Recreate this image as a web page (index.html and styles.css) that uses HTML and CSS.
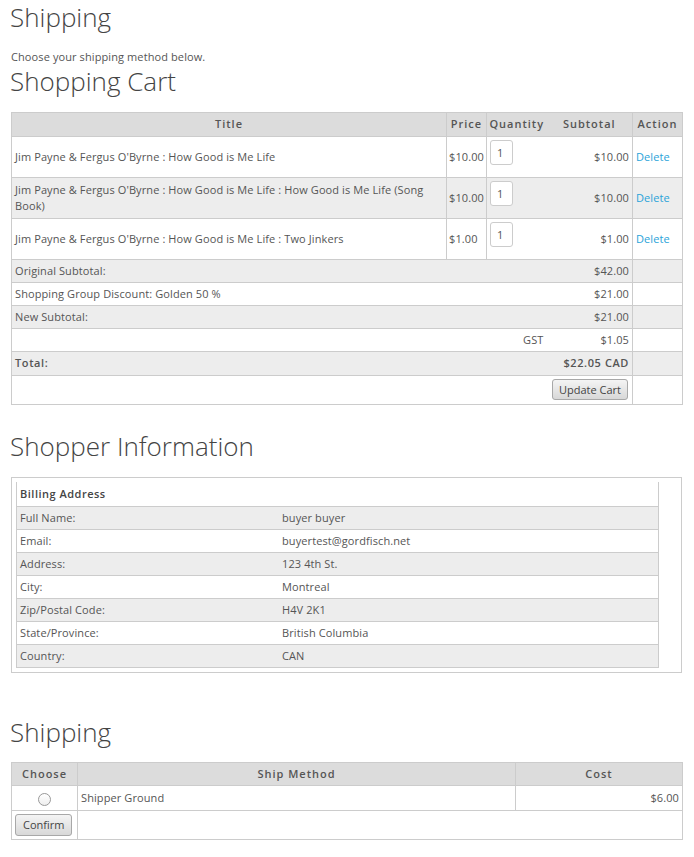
FILE: index.html
```html
<!DOCTYPE html>
<html lang="en">
<head>
    <meta charset="UTF-8">
    <title>Shipping</title>
    <link rel="stylesheet" href="styles.css">
</head>
<body>
    <h1 class="page-title">Shipping</h1>
    <p class="intro">Choose your shipping method below.</p>

    <h2 class="section-title first">Shopping Cart</h2>
    <table class="grid cart">
        <colgroup>
            <col class="c-title">
            <col class="c-price">
            <col class="c-qty">
            <col class="c-sub">
            <col class="c-action">
        </colgroup>
        <thead>
            <tr>
                <th>Title</th>
                <th>Price</th>
                <th class="h-qty">Quantity</th>
                <th class="h-sub">Subtotal</th>
                <th>Action</th>
            </tr>
        </thead>
        <tbody>
            <tr class="item first-item">
                <td>Jim Payne &amp; Fergus O'Byrne : How Good is Me Life</td>
                <td class="price">$10.00</td>
                <td class="qty"><input type="text" value="1"></td>
                <td class="num">$10.00</td>
                <td><a href="#">Delete</a></td>
            </tr>
            <tr class="item alt">
                <td>Jim Payne &amp; Fergus O'Byrne : How Good is Me Life : How Good is Me Life (Song Book)</td>
                <td class="price">$10.00</td>
                <td class="qty"><input type="text" value="1"></td>
                <td class="num">$10.00</td>
                <td><a href="#">Delete</a></td>
            </tr>
            <tr class="item">
                <td>Jim Payne &amp; Fergus O'Byrne : How Good is Me Life : Two Jinkers</td>
                <td class="price">$1.00</td>
                <td class="qty"><input type="text" value="1"></td>
                <td class="num">$1.00</td>
                <td><a href="#">Delete</a></td>
            </tr>

            <!-- totals -->
            <tr class="alt">
                <td colspan="4"><span class="label">Original Subtotal:</span><span class="amount">$42.00</span></td>
                <td></td>
            </tr>
            <tr>
                <td colspan="4"><span class="label">Shopping Group Discount: Golden 50 %</span><span class="amount">$21.00</span></td>
                <td></td>
            </tr>
            <tr class="alt">
                <td colspan="4"><span class="label">New Subtotal:</span><span class="amount">$21.00</span></td>
                <td></td>
            </tr>
            <tr>
                <td colspan="4" class="tax"><span class="tax-name">GST</span><span class="amount">$1.05</span></td>
                <td></td>
            </tr>
            <tr class="alt total">
                <td colspan="4"><span class="label">Total:</span><span class="amount">$22.05 CAD</span></td>
                <td></td>
            </tr>
            <tr class="actions">
                <td colspan="4" class="num"><button class="btn">Update Cart</button></td>
                <td></td>
            </tr>
        </tbody>
    </table>

    <h2 class="section-title">Shopper Information</h2>
    <div class="info-box">
        <table class="address">
            <tr class="head">
                <td colspan="2">Billing Address</td>
            </tr>
            <tr class="alt"><td class="field">Full Name:</td><td>buyer buyer</td></tr>
            <tr><td class="field">Email:</td><td>buyertest@gordfisch.net</td></tr>
            <tr class="alt"><td class="field">Address:</td><td>123 4th St.</td></tr>
            <tr><td class="field">City:</td><td>Montreal</td></tr>
            <tr class="alt"><td class="field">Zip/Postal Code:</td><td>H4V 2K1</td></tr>
            <tr><td class="field">State/Province:</td><td>British Columbia</td></tr>
            <tr class="alt"><td class="field">Country:</td><td>CAN</td></tr>
        </table>
    </div>

    <h2 class="section-title shipping">Shipping</h2>
    <table class="grid ship">
        <colgroup>
            <col class="c-choose">
            <col class="c-method">
            <col class="c-cost">
        </colgroup>
        <thead>
            <tr>
                <th>Choose</th>
                <th>Ship Method</th>
                <th>Cost</th>
            </tr>
        </thead>
        <tbody>
            <tr>
                <td class="center"><span class="radio"></span></td>
                <td>Shipper Ground</td>
                <td class="num">$6.00</td>
            </tr>
            <tr class="actions">
                <td><button class="btn">Confirm</button></td>
                <td colspan="2"></td>
            </tr>
        </tbody>
    </table>
</body>
</html>
```

FILE: styles.css
```css
body {
    font-family: "Open Sans", Arial, sans-serif;
    font-size: 11px;
    line-height: 16px;
    letter-spacing: 0.1px;
    color: #555;
    margin: 0;
    padding: 0 12px 0 11px;
    background: #fff;
}
h1, h2 {
    font-weight: 300;
    font-size: 26px;
    line-height: 30px;
    letter-spacing: 0;
    color: #444;
    margin: 0;
}
.page-title {
    margin: 2px 0 0 -1px;
}
.intro {
    margin: 17px 0 0;
}
.section-title {
    margin: 26px 0 16px -1px;
}
.section-title.first {
    margin-top: 1px;
}
.section-title.shipping {
    margin-top: 44px;
    margin-bottom: 15px;
}
a {
    color: #2aa3d9;
    text-decoration: none;
}

/* tables */
.grid {
    width: 100%;
    table-layout: fixed;
    border-collapse: collapse;
    border: 1px solid #ccc;
}
.grid th {
    background: #dcdcdc;
    font-weight: 600;
    letter-spacing: 1px;
    color: #555;
    padding: 3px 2px 4px;
    border: 1px solid #ccc;
    text-align: center;
    white-space: nowrap;
}
.grid td {
    padding: 3px 3px;
    border: 1px solid #ccc;
    text-align: left;
    vertical-align: middle;
}
.grid tr.alt td {
    background: #ededed;
}
.grid td.num {
    text-align: right;
}
.grid td.center {
    text-align: center;
}
.c-title { width: 435px; }
.c-price { width: 40px; }
.c-qty { width: 60px; }
.c-sub { width: 86px; }
.c-action { width: 50px; }

.cart tr.item td {
    height: 34px;
}
.cart td.price {
    padding-left: 2px;
    padding-right: 0;
}
.cart th.h-qty {
    border-right: none;
}
.cart th.h-sub {
    border-left: none;
}
.cart td.qty {
    vertical-align: top;
    border-right: none;
    padding-top: 3px;
}
.cart td.qty + td {
    border-left: none;
}
.qty input {
    display: block;
    width: 23px;
    height: 25px;
    box-sizing: border-box;
    border: 1px solid #ccc;
    border-radius: 3px;
    font: inherit;
    color: #555;
    padding: 3px 0 4px 6px;
}
.cart td .label {
    float: left;
}
.cart td .amount {
    float: right;
}
.cart td.tax {
    text-align: right;
}
.cart td.tax .tax-name {
    margin-right: 57px;
}
.cart tr.total td {
    font-weight: 600;
    letter-spacing: 0.6px;
    padding-bottom: 4px;
}
.cart tr.actions td {
    padding: 3px 4px 4px;
}

.btn {
    font: inherit;
    color: #444;
    background: linear-gradient(#f4f4f4, #d8d8d8);
    border: 1px solid #a8a8a8;
    border-radius: 3px;
    padding: 2px 6px;
    line-height: 15px;
    cursor: pointer;
}

/* shopper info */
.info-box {
    border: 1px solid #ccc;
    padding: 4px;
}
.address {
    width: 643px;
    border-collapse: collapse;
    border-left: 1px solid #ccc;
    border-right: 1px solid #ccc;
    border-bottom: 1px solid #ccc;
}
.address td {
    padding: 3px 3px;
    border-bottom: 1px solid #ccc;
}
.address tr.alt td {
    background: #ededed;
}
.address tr.head td {
    font-weight: 600;
    letter-spacing: 0.5px;
    color: #444;
    padding-top: 4px;
    padding-bottom: 4px;
}
.address td.field {
    width: 256px;
}

/* shipping */
.c-choose { width: 66px; }
.c-method { width: 438px; }
.c-cost { width: 167px; }
.ship th {
    padding-bottom: 3px;
}
.ship td {
    padding: 4px 3px;
}
.ship tr.actions td {
    padding: 3px 3px;
}
.ship .btn {
    padding: 2px 7px;
    line-height: 16px;
}
.radio {
    display: inline-block;
    width: 11px;
    height: 11px;
    border: 1px solid #999;
    border-radius: 50%;
    background: linear-gradient(#fff, #eee);
    vertical-align: middle;
}
```
